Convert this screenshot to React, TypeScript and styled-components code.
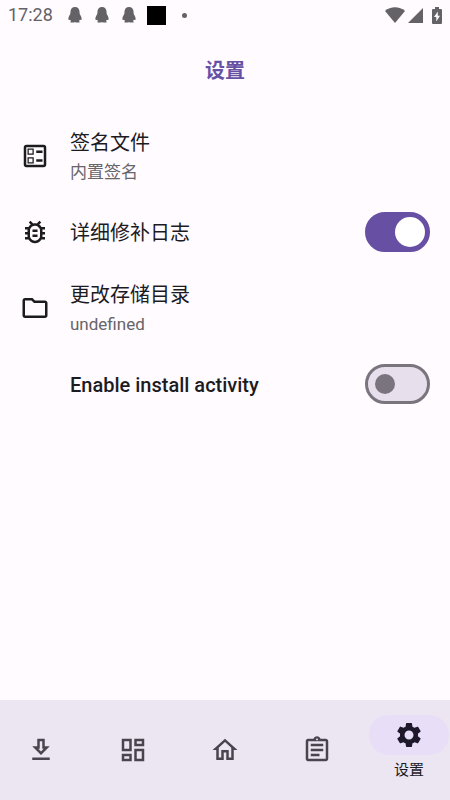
import React, { useState } from "react";
import styled, { createGlobalStyle } from "styled-components";

const GlobalStyle = createGlobalStyle`
  * { box-sizing: border-box; }
  body {
    margin: 0;
    background: #fffbff;
    color: #1c1b1f;
    font-family: Roboto, "Noto Sans CJK SC", sans-serif;
  }
`;

const Screen = styled.div`
  min-height: 100vh;
  display: flex;
  flex-direction: column;
`;

const StatusBar = styled.div`
  display: flex;
  align-items: center;
  justify-content: space-between;
  height: 30px;
  padding: 0 8px;
  color: #646266;
`;

const StatusGroup = styled.div<{ $gap: number }>`
  display: flex;
  align-items: center;
  gap: ${(p) => p.$gap}px;
`;

const Clock = styled.time`
  font-size: 18px;
  line-height: 30px;
  margin-right: 5px;
`;

const AppTile = styled.span`
  width: 19px;
  height: 19px;
  margin: 0 6px 0 1px;
  background: #000;
`;

const Dot = styled.span`
  width: 5px;
  height: 5px;
  border-radius: 50%;
  background: currentColor;
`;

const TopBar = styled.header`
  display: flex;
  align-items: center;
  justify-content: center;
  height: 82px;
`;

const PageTitle = styled.h1`
  margin: 0;
  font-size: 20px;
  line-height: 30px;
  font-weight: 700;
  color: #6750a4;
`;

const Settings = styled.main`
  flex: 1;
  padding-top: 6px;
`;

const Row = styled.label`
  display: flex;
  align-items: center;
  gap: 20px;
  min-height: 76px;
  padding: 8px 20px;
`;

const IconSlot = styled.span`
  display: flex;
  width: 30px;
  height: 30px;
`;

const RowText = styled.span`
  display: flex;
  flex: 1;
  flex-direction: column;
  padding-top: 2px;
`;

const RowTitle = styled.span<{ $medium?: boolean }>`
  font-size: 20px;
  line-height: 30px;
  font-weight: ${(p) => (p.$medium ? 500 : 400)};
`;

const RowSummary = styled.span`
  font-size: 17px;
  line-height: 28px;
  color: #676569;
`;

const Switch = styled.input`
  appearance: none;
  display: flex;
  align-items: center;
  width: 65px;
  height: 40px;
  margin: 0;
  padding: 0 7px;
  border: 3px solid #79747e;
  border-radius: 20px;
  background: #e7e0ec;

  &::before {
    content: "";
    width: 20px;
    height: 20px;
    border-radius: 50%;
    background: #79747e;
  }

  &:checked {
    justify-content: flex-end;
    padding: 0 2px;
    border-color: #6750a4;
    background: #6750a4;
  }

  &:checked::before {
    width: 30px;
    height: 30px;
    background: #fff;
  }
`;

const NavBar = styled.nav`
  display: grid;
  grid-template-columns: repeat(5, 1fr);
  gap: 10px;
  height: 100px;
  background: #ece6f2;
`;

const NavButton = styled.button<{ $active: boolean }>`
  display: flex;
  flex-direction: column;
  align-items: center;
  justify-content: center;
  padding: 0;
  border: 0;
  background: none;
  font: inherit;
  color: ${(p) => (p.$active ? "#1d192b" : "#49454f")};
`;

const Indicator = styled.span<{ $active: boolean }>`
  display: flex;
  align-items: center;
  justify-content: center;
  width: 80px;
  height: 40px;
  border-radius: 20px;
  background: ${(p) => (p.$active ? "#e8def8" : "transparent")};
`;

const NavLabel = styled.span`
  font-size: 15px;
  line-height: 30px;
  color: #1c1b1f;
`;

const paths = {
  ballot:
    "M13 7.5h5v2h-5zm0 7h5v2h-5zM19 3H5c-1.1 0-2 .9-2 2v14c0 1.1.9 2 2 2h14c1.1 0 2-.9 2-2V5c0-1.1-.9-2-2-2zm0 16H5V5h14v14zM11 6H6v5h5V6zm-1 4H7V7h3v3zm1 3H6v5h5v-5zm-1 4H7v-3h3v3z",
  bug:
    "M20 8h-2.81c-.45-.78-1.07-1.45-1.82-1.96L17 4.41 15.59 3l-2.17 2.17C12.96 5.06 12.49 5 12 5s-.96.06-1.41.17L8.41 3 7 4.41l1.62 1.63C7.88 6.55 7.26 7.22 6.81 8H4v2h2.09c-.05.33-.09.66-.09 1v1H4v2h2v1c0 .34.04.67.09 1H4v2h2.81c1.04 1.79 2.97 3 5.19 3s4.15-1.21 5.19-3H20v-2h-2.09c.05-.33.09-.66.09-1v-1h2v-2h-2v-1c0-.34-.04-.67-.09-1H20V8zm-4 4v3c0 .22-.03.47-.07.7l-.1.65-.37.65c-.72 1.24-2.04 2-3.46 2s-2.74-.77-3.46-2l-.37-.64-.1-.65C8.03 15.48 8 15.23 8 15v-4c0-.23.03-.48.07-.7l.1-.65.37-.65c.3-.52.72-.97 1.21-1.31l.57-.39.74-.18c.31-.08.63-.12.94-.12.32 0 .63.04.95.12l.68.16.61.42c.5.34.91.78 1.21 1.31l.38.65.1.65c.04.22.07.47.07.69v1zm-6 2h4v2h-4zm0-4h4v2h-4z",
  folder:
    "M9.17 6l2 2H20v10H4V6h5.17M10 4H4c-1.1 0-1.99.9-1.99 2L2 18c0 1.1.9 2 2 2h16c1.1 0 2-.9 2-2V8c0-1.1-.9-2-2-2h-8l-2-2z",
  download:
    "M19 9h-4V3H9v6H5l7 7 7-7zm-8 2V5h2v6h1.17L12 13.17 9.83 11H11zm-6 7h14v2H5z",
  dashboard:
    "M19 5v2h-4V5h4M9 5v6H5V5h4m10 8v6h-4v-6h4M9 17v2H5v-2h4M21 3h-8v6h8V3zM11 3H3v10h8V3zm10 8h-8v10h8V11zm-10 4H3v6h8v-6z",
  home:
    "M12 5.69l5 4.5V18h-2v-6H9v6H7v-7.81l5-4.5M12 3L2 12h3v8h6v-6h2v6h6v-8h3L12 3z",
  clipboard:
    "M7 15h7v2H7zm0-4h10v2H7zm0-4h10v2H7zm12-4h-4.18C14.4 1.84 13.3 1 12 1c-1.3 0-2.4.84-2.82 2H5c-.14 0-.27.01-.4.04-.39.08-.74.28-1.01.55-.18.18-.33.4-.43.64-.1.23-.16.49-.16.77v14c0 .27.06.54.16.78s.25.45.43.64c.27.27.62.47 1.01.55.13.02.26.03.4.03h14c1.1 0 2-.9 2-2V5c0-1.1-.9-2-2-2zm-7-.25c.41 0 .75.34.75.75s-.34.75-.75.75-.75-.34-.75-.75.34-.75.75-.75zM19 19H5V5h14v14z",
  gear:
    "M19.14 12.94c.04-.3.06-.61.06-.94 0-.32-.02-.64-.07-.94l2.03-1.58c.18-.14.23-.41.12-.61l-1.92-3.32c-.12-.22-.37-.29-.59-.22l-2.39.96c-.5-.38-1.03-.7-1.62-.94l-.36-2.54c-.04-.24-.24-.41-.48-.41h-3.84c-.24 0-.43.17-.47.41l-.36 2.54c-.59.24-1.13.57-1.62.94l-2.39-.96c-.22-.08-.47 0-.59.22L2.74 8.87c-.12.21-.08.47.12.61l2.03 1.58c-.05.3-.09.63-.09.94s.02.64.07.94l-2.03 1.58c-.18.14-.23.41-.12.61l1.92 3.32c.12.22.37.29.59.22l2.39-.96c.5.38 1.03.7 1.62.94l.36 2.54c.05.24.24.41.48.41h3.84c.24 0 .44-.17.47-.41l.36-2.54c.59-.24 1.13-.56 1.62-.94l2.39.96c.22.08.47 0 .59-.22l1.92-3.32c.12-.22.07-.47-.12-.61l-2.01-1.58zM12 15.6c-1.98 0-3.6-1.62-3.6-3.6s1.62-3.6 3.6-3.6 3.6 1.62 3.6 3.6-1.62 3.6-3.6 3.6z",
};

type IconName = keyof typeof paths;

const Icon = ({ name }: { name: IconName }) => (
  <svg width="30" height="30" viewBox="0 0 24 24" fill="currentColor" aria-hidden="true">
    <path d={paths[name]} />
  </svg>
);

const Penguin = () => (
  <svg width="14" height="16" viewBox="0 0 14 16" fill="currentColor" aria-hidden="true">
    <path d="M7 0C4.200 0 2.600 1.800 2.500 4.500L2.300 7C1.200 8.600.4 10.200.4 11.700c0 1.300.5 1.600 1.600 1l.8.8-.4 2h3.800l.8-.6.8.6h3.800l-.4-2 .8-.8c1.100.6 1.600.3 1.600-1 0-1.500-.8-3.100-1.900-4.700l-.2-2.500C11.400 1.800 9.800 0 7 0z" />
  </svg>
);

const Wifi = () => (
  <svg width="20" height="16" viewBox="0 0 20 16" fill="currentColor" aria-hidden="true">
    <path d="M0 4C5.500-.9 14.500-.9 20 4L10 16z" />
  </svg>
);

const Signal = () => (
  <svg width="15" height="15" viewBox="0 0 15 15" fill="currentColor" aria-hidden="true">
    <path d="M15 0v15H0z" />
  </svg>
);

const Battery = () => (
  <svg width="10" height="17" viewBox="0 0 10 17" aria-hidden="true">
    <path fill="currentColor" d="M3 0h4v2h2q1 0 1 1v13q0 1-1 1H1q-1 0-1-1V3q0-1 1-1h2z" />
    <path fill="#fffbff" d="M5.800 4.500 2 10h2.300v4.500L8 8.700H5.800z" />
  </svg>
);

const navItems: { icon: IconName; name: string }[] = [
  { icon: "download", name: "下载" },
  { icon: "dashboard", name: "管理" },
  { icon: "home", name: "主页" },
  { icon: "clipboard", name: "日志" },
  { icon: "gear", name: "设置" },
];

export default function App() {
  const [verbose, setVerbose] = useState(true);
  const [install, setInstall] = useState(false);
  const [active, setActive] = useState(4);

  return (
    <Screen lang="zh-CN">
      <GlobalStyle />
      <StatusBar>
        <StatusGroup $gap={10}>
          <Clock>17:28</Clock>
          <StatusGroup $gap={13}>
            <Penguin />
            <Penguin />
            <Penguin />
          </StatusGroup>
          <AppTile />
          <Dot />
        </StatusGroup>
        <StatusGroup $gap={9}>
          <StatusGroup $gap={3}>
            <Wifi />
            <Signal />
          </StatusGroup>
          <Battery />
        </StatusGroup>
      </StatusBar>
      <TopBar>
        <PageTitle>设置</PageTitle>
      </TopBar>
      <Settings>
        <Row as="div">
          <IconSlot><Icon name="ballot" /></IconSlot>
          <RowText>
            <RowTitle>签名文件</RowTitle>
            <RowSummary>内置签名</RowSummary>
          </RowText>
        </Row>
        <Row>
          <IconSlot><Icon name="bug" /></IconSlot>
          <RowText><RowTitle>详细修补日志</RowTitle></RowText>
          <Switch type="checkbox" role="switch" checked={verbose} onChange={(e) => setVerbose(e.target.checked)} />
        </Row>
        <Row as="div">
          <IconSlot><Icon name="folder" /></IconSlot>
          <RowText>
            <RowTitle>更改存储目录</RowTitle>
            <RowSummary>undefined</RowSummary>
          </RowText>
        </Row>
        <Row>
          <IconSlot />
          <RowText><RowTitle $medium>Enable install activity</RowTitle></RowText>
          <Switch type="checkbox" role="switch" checked={install} onChange={(e) => setInstall(e.target.checked)} />
        </Row>
      </Settings>
      <NavBar>
        {navItems.map((item, i) => (
          <NavButton
            key={item.icon}
            type="button"
            $active={i === active}
            aria-label={item.name}
            aria-current={i === active ? "page" : undefined}
            onClick={() => setActive(i)}
          >
            <Indicator $active={i === active}><Icon name={item.icon} /></Indicator>
            {i === active && <NavLabel>{item.name}</NavLabel>}
          </NavButton>
        ))}
      </NavBar>
    </Screen>
  );
}
